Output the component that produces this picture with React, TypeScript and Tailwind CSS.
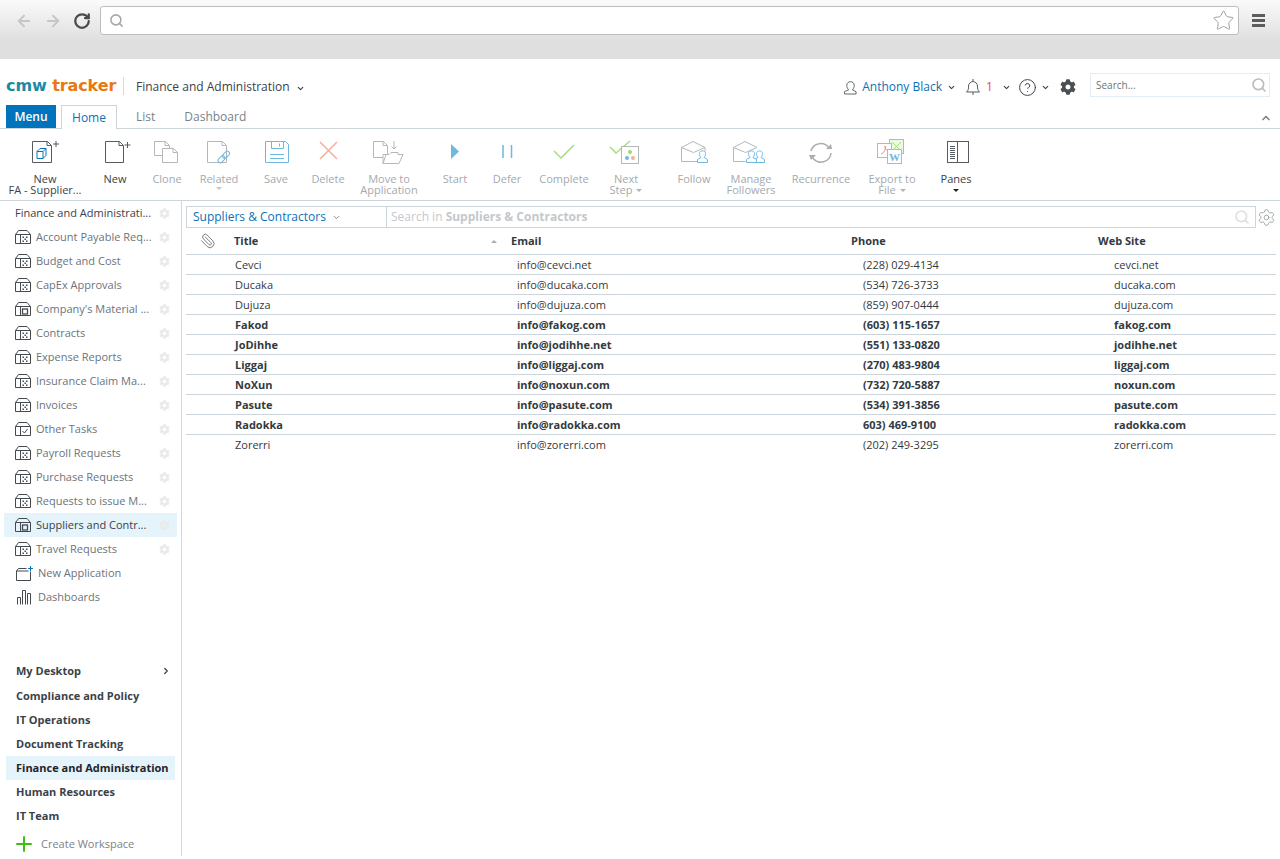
import type { ReactNode } from 'react'
import {
  ArrowLeft,
  ArrowRight,
  ChevronDown,
  ChevronRight,
  ChevronUp,
  CircleHelp,
  Paperclip,
  Plus,
  RotateCw,
  Search,
  Settings,
  Star,
} from 'lucide-react'
import { FaCog } from 'react-icons/fa'

function Svg({ children, w = 32, h = 26 }: { children: ReactNode; w?: number; h?: number }) {
  return (
    <svg width={w} height={h} viewBox={`0 0 ${w} ${h}`} fill="none" strokeWidth={1} className="overflow-visible">
      {children}
    </svg>
  )
}

const dark = '#555b60'
const grey = '#b4b8bb'
const blue = '#6db9e0'

function Page({ x, y, w = 19, h = 22, c }: { x: number; y: number; w?: number; h?: number; c: string }) {
  return (
    <path
      d={`M${x + 0.5} ${y + 0.5}h${w - 5}l4 4v${h - 5}h-${w - 1}z M${x + w - 5} ${y + 0.5}v4h4`}
      stroke={c}
      fill="#fff"
    />
  )
}

function Person({ x, c }: { x: number; c: string }) {
  return (
    <path
      d={`M${x + 0.5} 23.500v-3l3.500-2c-1-1-1.500-2.500-1.500-4 0-3.500 6-3.500 6 0 0 1.500-.5 3-1.500 4l3.500 2v3z`}
      stroke={c}
      fill="#fff"
    />
  )
}

const icons: Record<string, ReactNode> = {
  newFa: (
    <Svg>
      <Page x={3} y={2} w={20} c={dark} />
      <path d="M28 2v6M25 5h6" stroke={dark} transform="translate(-1 0)" />
      <path d="M8 12.500l3-3h6v7l-3 3H8zM8 12.500h6v7M14 12.500l3-3" stroke="#0b72b5" />
    </Svg>
  ),
  newDoc: (
    <Svg>
      <Page x={6} y={2} c={dark} />
      <path d="M28.500 3v6M25.500 6h6" stroke={dark} />
    </Svg>
  ),
  clone: (
    <Svg>
      <Page x={3} y={2} w={16} h={15} c={grey} />
      <Page x={11} y={9} w={16} h={15} c={grey} />
    </Svg>
  ),
  related: (
    <Svg>
      <Page x={4} y={2} w={20} c={grey} />
      <rect x={14.500} y={18} width={8} height={4.500} rx={2.200} transform="rotate(-45 18.500 20.200)" stroke={blue} fill="#fff" />
      <rect x={19} y={13.500} width={8} height={4.500} rx={2.200} transform="rotate(-45 23 15.700)" stroke={blue} />
    </Svg>
  ),
  save: (
    <Svg>
      <path d="M5.500 2.500h20l3 3v18h-23z" stroke={blue} />
      <path d="M11.500 2.500v7h12v-7M19.500 4.500v3M10 15.500h14M10 19.500h14" stroke={blue} />
    </Svg>
  ),
  del: (
    <Svg>
      <path d="M8 3l17 17M25 3L8 20" stroke="#f5ad9c" strokeWidth={1.500} />
    </Svg>
  ),
  move: (
    <Svg>
      <Page x={0} y={2} w={15} h={17} c={grey} />
      <path d="M10 24.500l3-9h3l2-2h7v2h5l-4 9zM10 24.500v-9h3" stroke={grey} fill="#fff" />
      <path d="M21 2v8M18.500 7.500l2.500 2.500 2.500-2.500" stroke={grey} />
    </Svg>
  ),
  start: (
    <Svg>
      <path d="M12 5l8 7.500-8 7.500z" fill={blue} />
    </Svg>
  ),
  defer: (
    <Svg>
      <path d="M12 6v13M20.500 6v13" stroke={blue} strokeWidth={1.500} />
    </Svg>
  ),
  complete: (
    <Svg>
      <path d="M6 12l7 7L26 6" stroke="#a3df7d" strokeWidth={1.500} />
    </Svg>
  ),
  next: (
    <Svg>
      <path d="M0 8l6 6L20 2" stroke="#a3df7d" strokeWidth={1.500} />
      <rect x={11.500} y={7.500} width={17} height={17} stroke={grey} fill="#fff" />
      <circle cx={20} cy={13} r={2} fill="#9bd972" />
      <circle cx={17} cy={19} r={2} fill={blue} />
      <circle cx={23} cy={19} r={2} fill="#f5ad9c" />
    </Svg>
  ),
  follow: (
    <Svg w={34}>
      <path d="M4.500 8.500L16 2.500l12 6M4.500 8.500v14h16M28 8.500v4M4.500 8.500l12 5 11.500-5" stroke={grey} />
      <Person x={20} c={blue} />
    </Svg>
  ),
  manage: (
    <Svg w={34}>
      <path d="M-.5 8.500L11 2.500l12 6M-.5 8.500v14h12M-.5 8.500l12 5 11.500-5" stroke={grey} />
      <Person x={20} c={blue} />
      <Person x={12} c={blue} />
    </Svg>
  ),
  recur: (
    <Svg>
      <path d="M6 12a10 10 0 0 1 18-3M26 14a10 10 0 0 1-18 5" stroke="#aaadb0" strokeWidth={1.500} />
      <path d="M21 11h6l-1-5zM11 17H4l2 5z" fill="#aaadb0" transform="translate(0 -1)" />
    </Svg>
  ),
  exportFile: (
    <Svg>
      <rect x={13.500} y={0.500} width={14} height={14} stroke={grey} fill="#eef8e6" />
      <path d="M16 3l9 9M25 3l-9 9" stroke="#a3df7d" />
      <rect x={1.500} y={4.500} width={14} height={14} stroke={grey} fill="#fff" />
      <path d="M5 15c3-1 5-5 4-8 0 3 2 5 5 6" stroke="#f08a80" />
      <rect x={11.500} y={10.500} width={14} height={14} stroke={grey} fill="#fff" />
      <text x={18.500} y={22} textAnchor="middle" fontSize={11} fontWeight={700} fontFamily="'Liberation Serif', serif" fill={blue}>
        W
      </text>
    </Svg>
  ),
  panes: (
    <Svg>
      <rect x={7.500} y={2.500} width={21} height={21} stroke={dark} />
      <path d="M17.500 2.500v21M10 7.500h5M10 9.500h5M10 11.500h5M10 13.500h5M10 15.500h5M10 17.500h5M10 19.500h5" stroke={dark} />
    </Svg>
  ),
}

type RibbonItem = {
  icon: string
  lines: string[]
  w: string
  active?: boolean
  caret?: 'below' | 'inline' | 'black'
}

const ribbon: RibbonItem[] = [
  { icon: 'newFa', lines: ['New', 'FA - Supplier...'], w: 'w-[90px]', active: true },
  { icon: 'newDoc', lines: ['New'], w: 'w-[50px]', active: true },
  { icon: 'clone', lines: ['Clone'], w: 'w-[54px]' },
  { icon: 'related', lines: ['Related'], w: 'w-[50px]', caret: 'below' },
  { icon: 'save', lines: ['Save'], w: 'w-[64px]' },
  { icon: 'del', lines: ['Delete'], w: 'w-[40px]' },
  { icon: 'move', lines: ['Move to', 'Application'], w: 'w-[82px]' },
  { icon: 'start', lines: ['Start'], w: 'w-[50px]' },
  { icon: 'defer', lines: ['Defer'], w: 'w-[54px]' },
  { icon: 'complete', lines: ['Complete'], w: 'w-[60px]' },
  { icon: 'next', lines: ['Next', 'Step'], w: 'w-[64px]', caret: 'inline' },
  { icon: 'follow', lines: ['Follow'], w: 'w-[72px]' },
  { icon: 'manage', lines: ['Manage', 'Followers'], w: 'w-[42px]' },
  { icon: 'recur', lines: ['Recurrence'], w: 'w-[98px]' },
  { icon: 'exportFile', lines: ['Export to', 'File'], w: 'w-[44px]', caret: 'inline' },
  { icon: 'panes', lines: ['Panes'], w: 'w-[84px]', active: true, caret: 'black' },
]

function RibbonButton({ item }: { item: RibbonItem }) {
  const last = item.lines.length - 1
  return (
    <div className={`${item.w} flex flex-col items-center shrink-0`}>
      <div className="h-[29px] flex justify-center w-[34px] pt-[10px] box-content">{icons[item.icon]}</div>
      <div
        className={`mt-[5px] text-[11px] leading-[11px] text-center whitespace-nowrap ${
          item.active ? 'text-[#3a4249]' : 'text-[#a3aaaf]'
        }`}
      >
        {item.lines.map((line, i) => (
          <div key={line}>
            {line}
            {item.caret === 'inline' && i === last && (
              <span className="inline-block ml-1 mb-[2px] border-x-[3px] border-t-[3px] border-x-transparent border-t-[#b0b5b9]" />
            )}
          </div>
        ))}
        {item.caret === 'below' && (
          <div className="mx-auto mt-[3px] w-0 border-x-[3px] border-t-[3px] border-x-transparent border-t-[#c2c6c9]" />
        )}
        {item.caret === 'black' && (
          <div className="mx-auto mt-[5px] w-0 border-x-[3px] border-t-[3px] border-x-transparent border-t-[#222]" />
        )}
      </div>
    </div>
  )
}

function FolderIcon({ kind }: { kind: 'dots' | 'square' | 'check' }) {
  return (
    <svg width="16" height="14" viewBox="0 0 16 14" fill="none" stroke="#444a4f" strokeWidth={1} className="shrink-0">
      <path d="M.5 13.500V4.500L3.500.5h8.500l3.500 4v9zM.5 4.500h15M5.500 4.500v9" />
      {kind === 'dots' && (
        <path d="M7.500 6.500h1.500V8H7.500zM11 6.500h1.500V8H11zM9.500 8.500H11V10H9.500zM7.500 10.500h1.500V12H7.500zM11 10.500h1.500V12H11z" fill="#444a4f" stroke="none" />
      )}
      {kind === 'square' && <rect x={7.500} y={7} width={5} height={5} strokeWidth={1.300} />}
      {kind === 'check' && <path d="M7.500 9l2 2 3-4" />}
    </svg>
  )
}

const apps: { name: string; kind: 'dots' | 'square' | 'check'; selected?: boolean }[] = [
  { name: 'Account Payable Req...', kind: 'dots' },
  { name: 'Budget and Cost', kind: 'dots' },
  { name: 'CapEx Approvals', kind: 'dots' },
  { name: "Company's Material ...", kind: 'square' },
  { name: 'Contracts', kind: 'dots' },
  { name: 'Expense Reports', kind: 'dots' },
  { name: 'Insurance Claim Ma...', kind: 'dots' },
  { name: 'Invoices', kind: 'dots' },
  { name: 'Other Tasks', kind: 'check' },
  { name: 'Payroll Requests', kind: 'dots' },
  { name: 'Purchase Requests', kind: 'dots' },
  { name: 'Requests to issue M...', kind: 'dots' },
  { name: 'Suppliers and Contr...', kind: 'square', selected: true },
  { name: 'Travel Requests', kind: 'dots' },
]

const workspaces = ['Compliance and Policy', 'IT Operations', 'Document Tracking', 'Finance and Administration', 'Human Resources', 'IT Team']

const rows = [
  ['Cevci', 'info@cevci.net', '(228) 029-4134', 'cevci.net', false],
  ['Ducaka', 'info@ducaka.com', '(534) 726-3733', 'ducaka.com', false],
  ['Dujuza', 'info@dujuza.com', '(859) 907-0444', 'dujuza.com', false],
  ['Fakod', 'info@fakog.com', '(603) 115-1657', 'fakog.com', true],
  ['JoDihhe', 'info@jodihhe.net', '(551) 133-0820', 'jodihhe.net', true],
  ['Liggaj', 'info@liggaj.com', '(270) 483-9804', 'liggaj.com', true],
  ['NoXun', 'info@noxun.com', '(732) 720-5887', 'noxun.com', true],
  ['Pasute', 'info@pasute.com', '(534) 391-3856', 'pasute.com', true],
  ['Radokka', 'info@radokka.com', '603) 469-9100', 'radokka.com', true],
  ['Zorerri', 'info@zorerri.com', '(202) 249-3295', 'zorerri.com', false],
] as const

const gridCols = 'grid grid-cols-[48px_277px_340px_247px_1fr]'

function Sidebar() {
  return (
    <aside className="w-[182px] shrink-0 border-r border-[#d4d7d9] flex flex-col pl-1 pr-1 text-[11px] h-[655px]">
      <div className="flex items-center h-6 pl-[11px] text-[#3a4249]">
        <span className="w-[144px] whitespace-nowrap">Finance and Administrati...</span>
        <FaCog size={11} className="text-[#e8eaec]" />
      </div>
      {apps.map((app) => (
        <div key={app.name} className={`flex items-center h-6 pl-[11px] w-[173px] ${app.selected ? 'bg-[#e5f3fb] text-[#3a4249]' : 'text-[#6b747b]'}`}>
          <FolderIcon kind={app.kind} />
          <span className="ml-[5px] w-[123px] whitespace-nowrap">{app.name}</span>
          <FaCog size={11} className="text-[#e8eaec]" />
        </div>
      ))}
      <div className="flex items-center h-6 pl-3 text-[#6b747b]">
        <svg width="18" height="15" viewBox="0 0 18 15" fill="none" stroke="#444a4f" className="shrink-0">
          <path d="M0.500 14.500V5l2-2.500h8M0.500 5h12M14.500 5.500v9h-14" />
          <path d="M14.500 0v5M12 2.500h5" stroke="#0b72b5" />
        </svg>
        <span className="ml-1">New Application</span>
      </div>
      <div className="flex items-center h-6 pl-3 text-[#6b747b]">
        <svg width="18" height="16" viewBox="0 0 18 16" fill="none" stroke="#444a4f" className="shrink-0">
          <path d="M1.500 15.500v-7h3v7M6.500 15.500V1.500h3v14M11.500 15.500v-11h3v11" />
        </svg>
        <span className="ml-1">Dashboards</span>
      </div>
      <div className="flex-1" />
      <div className="flex items-center justify-between h-6 mb-px pl-3 pr-[6px] font-bold text-[#3a4249] w-[173px]">
        My Desktop
        <ChevronRight size={10} strokeWidth={3} className="text-[#3a4249]" />
      </div>
      {workspaces.map((w) => (
        <div
          key={w}
          className={`flex items-center h-6 pl-[10px] ml-[2px] w-[169px] font-bold whitespace-nowrap ${
            w === 'Finance and Administration' ? 'bg-[#e5f3fb] text-[#1e2429]' : 'text-[#3a4249]'
          }`}
        >
          {w}
        </div>
      ))}
      <div className="flex items-center h-7 pl-2 pt-1 text-[#7b838a]">
        <Plus size={24} strokeWidth={2} className="text-[#3cc010] shrink-0" />
        <span className="ml-[5px]">Create Workspace</span>
      </div>
    </aside>
  )
}

function RecordsTable() {
  return (
    <section className="flex-1 pl-1 pt-[5px] text-[11px]">
      <div className="flex items-center h-[22px] w-full">
        <div className="flex items-center flex-1 h-full border border-[#ccd5dc]">
          <div className="w-[200px] h-full flex items-center pl-[6px] border-r border-[#ccd5dc] text-[12px] text-[#0b72b5]">
            Suppliers &amp; Contractors
            <ChevronDown size={9} strokeWidth={2.500} className="ml-[6px] text-[#7f8a92]" />
          </div>
          <div className="flex-1 pl-1 text-[12px] text-[#c4c8cc]">
            Search in <b>Suppliers &amp; Contractors</b>
          </div>
          <Search size={16} strokeWidth={2.500} className="mr-[5px] text-[#dde0e2]" />
        </div>
        <div className="w-6 flex justify-end pr-1">
          <Settings size={19} strokeWidth={1} className="text-[#8e9499]" />
        </div>
      </div>
      <div className="mr-1">
        <div className={`${gridCols} h-[27px] items-center border-b border-[#ccd5dc] font-bold text-[#333a40]`}>
          <div className="pl-[14px]">
            <Paperclip size={16} strokeWidth={1.500} className="text-[#777d82] -scale-x-100" />
          </div>
          <div className="flex items-center justify-between pr-[14px]">
            Title
            <span className="w-0 border-x-[3px] border-b-[3px] border-x-transparent border-b-[#a9adb0]" />
          </div>
          <div>Email</div>
          <div>Phone</div>
          <div>Web Site</div>
        </div>
        {rows.map(([title, email, phone, site, unread], i) => (
          <div
            key={title}
            className={`${gridCols} h-5 pt-[2px] items-center text-[#333a40] border-b ${
              i < rows.length - 1 ? 'border-[#ccd5dc]' : 'border-transparent'
            } ${unread ? 'font-bold' : ''}`}
          >
            <div />
            <div className="pl-px">{title}</div>
            <div className="pl-[6px]">{email}</div>
            <div className="pl-3">{phone}</div>
            <div className="pl-4">{site}</div>
          </div>
        ))}
      </div>
    </section>
  )
}

export default function App() {
  return (
    <div className="w-[1280px] h-[859px] overflow-hidden bg-white font-['Open_Sans',sans-serif]">
      <div className="h-[59px] bg-gradient-to-b from-[#fafafa] to-[#dfdfdf] to-[70%] pt-[6px] flex items-start">
        <div className="flex items-center h-[29px] w-[100px] pl-[15px] gap-[11px]">
          <ArrowLeft size={18} strokeWidth={2.500} className="text-[#c6c6c6]" />
          <ArrowRight size={18} strokeWidth={2.500} className="text-[#c6c6c6]" />
          <RotateCw size={18} strokeWidth={3} className="text-[#4a4a4a]" />
        </div>
        <div className="w-[1139px] h-[29px] bg-white border border-[#bdbdbd] rounded-[3px] flex items-center justify-between pl-[8px] pr-[3px]">
          <Search size={15} strokeWidth={2.500} className="text-[#a8a8a8]" />
          <Star size={23} strokeWidth={1} className="text-[#9c9c9c]" />
        </div>
        <div className="ml-[13px] mt-2 flex flex-col gap-[2px]">
          <span className="block w-[13px] h-[3px] bg-[#5c5c5c]" />
          <span className="block w-[13px] h-[3px] bg-[#5c5c5c]" />
          <span className="block w-[13px] h-[3px] bg-[#5c5c5c]" />
        </div>
      </div>

      <header className="h-[45px] flex items-start pt-[15px] pl-[6px]">
        <div className="flex items-center h-[26px] w-full">
          <div className="text-[16px] leading-none font-bold font-['DejaVu_Sans',sans-serif] whitespace-nowrap w-[110px] tracking-[-0.1px] -mt-[2px]">
            <span className="text-[#1a8aa3]">cmw</span> <span className="text-[#e8780f]">tracker</span>
          </div>
          <div className="w-px h-[18px] bg-[#d5d8da] ml-[7px] -mt-[2px]" />
          <span className="ml-[12px] text-[12px] text-[#3a4249]">Finance and Administration</span>
          <ChevronDown size={9} strokeWidth={3} className="ml-[6px] mt-[2px] text-[#3a4249]" />
          <div className="flex-1" />
          <svg width="13" height="15" viewBox="0 0 14 15" fill="none" stroke="#555b60" className="-ml-px">
            <path d="M0.500 14.500v-2.500l4.500-2c-1.500-1.500-2-3-2-5 0-5 8-5 8 0 0 2-.5 3.500-2 5l4 2v2.500z" />
          </svg>
          <span className="ml-[5px] text-[12px] text-[#0b72b5]">Anthony Black</span>
          <ChevronDown size={9} strokeWidth={3} className="ml-[5px] text-[#3a4249]" />
          <svg width="14" height="16" viewBox="0 0 14 16" fill="none" stroke="#555b60" className="ml-[10px]">
            <path d="M7 0v2M0.500 13c2-2 2-3 2-6 0-2 2-4.500 4.500-4.500S11.500 5 11.500 7c0 3 0 4 2 6zM7 13v3" />
          </svg>
          <span className="ml-[6px] w-[14px] text-[12px] text-[#f0443c]">1</span>
          <ChevronDown size={9} strokeWidth={3} className="ml-[2px] text-[#3a4249]" />
          <CircleHelp size={19} strokeWidth={1.250} className="ml-[7px] text-[#3a4249]" />
          <ChevronDown size={9} strokeWidth={3} className="ml-[4px] text-[#3a4249]" />
          <FaCog size={16} className="ml-[10px] text-[#4a4f53]" />
          <div className="ml-[14px] mr-[10px] w-[180px] h-[24px] -mt-[4px] border border-[#e3edf5] flex items-center justify-between pl-[5px] pr-[2px]">
            <span className="text-[10px] text-[#6b747b]">Search...</span>
            <Search size={16} strokeWidth={2.500} className="text-[#b9bdc0]" />
          </div>
        </div>
      </header>

      <nav className="h-[25px] border-b border-[#ccd5da] flex items-end pl-[6px] text-[12px]">
        <div className="w-[50px] h-[23px] bg-[#0073bd] text-white font-semibold flex items-center justify-center">Menu</div>
        <div className="ml-[5px] w-[56px] h-6 -mb-px bg-white border border-b-0 border-[#ccd5da] text-[#0b72b5] flex items-center justify-center">Home</div>
        <div className="ml-[19px] h-[23px] flex items-center text-[#78838c]">List</div>
        <div className="ml-[29px] h-[23px] flex items-center text-[#78838c]">Dashboard</div>
        <div className="flex-1" />
        <ChevronUp size={12} strokeWidth={3.500} className="mr-2 mb-1 text-[#80878c]" />
      </nav>

      <div className="h-[72px] border-b border-[#ccd5da] flex">
        {ribbon.map((item) => (
          <RibbonButton key={item.icon} item={item} />
        ))}
      </div>

      <div className="flex">
        <Sidebar />
        <RecordsTable />
      </div>
    </div>
  )
}
